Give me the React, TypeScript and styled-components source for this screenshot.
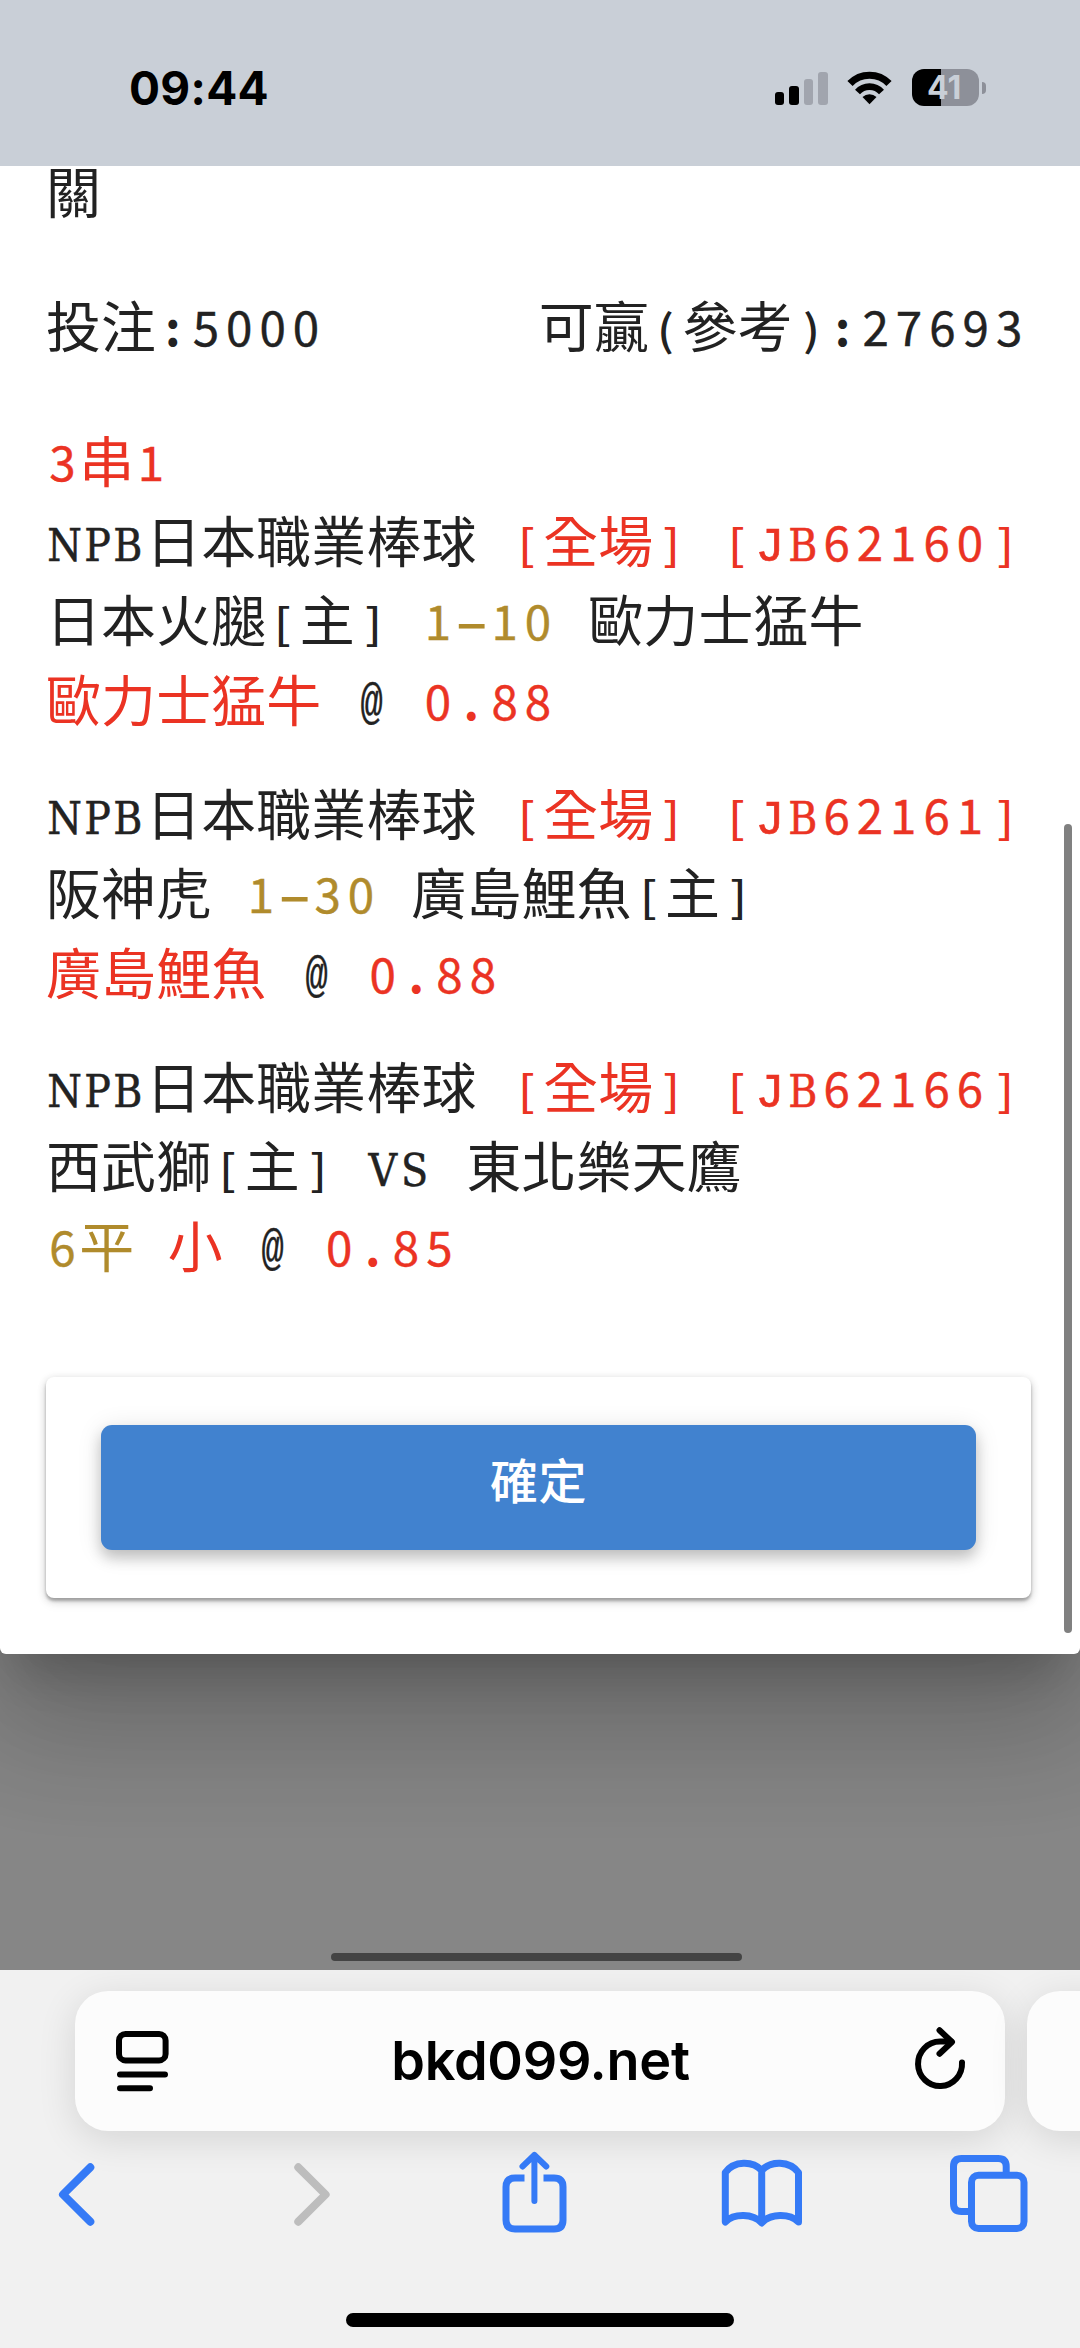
import React from "react";
import styled, { createGlobalStyle } from "styled-components";

const Global = createGlobalStyle`
  * { box-sizing: border-box; }
  html, body { margin: 0; padding: 0; }
  body { background: #868686; }
`;

const INK = "#222222";
const RED = "#eb3323";
const GOLD = "#b08b2c";
const BLUE = "#357af6";
const CJK = `"Noto Sans CJK TC", "Noto Sans CJK JP", sans-serif`;
const UI = `Inter, "Liberation Sans", sans-serif`;
const PITCH = 33.35;

const Screen = styled.div`
  width: 1080px;
  height: 2348px;
  display: flex;
  flex-direction: column;
  overflow: hidden;
  background: #868686;
`;

const StatusBar = styled.header`
  flex: none;
  height: 166px;
  padding: 9px 94.5px 0 129px;
  display: flex;
  align-items: center;
  justify-content: space-between;
  background: #c9cfd7;
  position: relative;
  z-index: 2;
`;

const Clock = styled.span`
  font: 700 46px/56px ${UI};
  letter-spacing: 0.3px;
  color: #000;
`;

const StatusIcons = styled.div`
  display: flex;
  align-items: center;
`;

const Signal = styled.div`
  display: flex;
  align-items: flex-end;
  gap: 5px;
  height: 34px;
  margin-right: 19px;
`;

const SignalBar = styled.i<{ $h: number; $on?: boolean }>`
  width: 9.4px;
  height: ${(p) => p.$h}px;
  border-radius: 3px;
  background: ${(p) => (p.$on ? "#000" : "#a1a5ae")};
`;

const Battery = styled.div`
  width: 67.5px;
  height: 37px;
  margin-left: 20px;
  padding-right: 2px;
  border-radius: 12px;
  background: linear-gradient(90deg, #000 0 28.5px, #8d9099 28.5px);
  color: #c9cfd7;
  font: 700 32px/37px ${UI};
  letter-spacing: 0.2px;
  text-align: center;
`;

const BatteryNub = styled.i`
  width: 4px;
  height: 12px;
  margin-left: 2.5px;
  border-radius: 0 4px 4px 0;
  background: #8d9099;
`;

const Page = styled.main`
  flex: none;
  height: 1803.5px;
  position: relative;
  overflow: hidden;
`;

const Dialog = styled.section`
  height: 1488px;
  overflow: hidden;
  background: #fff;
  border-radius: 0 0 6px 6px;
  box-shadow: 0 33px 45px -21px rgba(0, 0, 0, 0.2), 0 72px 114px 9px rgba(0, 0, 0, 0.14),
    0 27px 138px 24px rgba(0, 0, 0, 0.12);
`;

const DialogBody = styled.div`
  margin-top: -16px;
  padding: 0 49px 0 46px;
`;

const Line = styled.div`
  height: 79.7px;
  font: 400 54.9px/79.7px ${CJK};
  letter-spacing: 0.2px;
  color: ${INK};
  white-space: pre;
`;

const Totals = styled.div`
  display: flex;
  justify-content: space-between;
  margin: 54.8px 0;
  padding-right: 5px;
`;

const Bet = styled.article`
  margin-bottom: 34px;
`;

const Ink = styled.span<{ $c: string }>`
  color: ${(p) => p.$c};
`;

const Run = styled.span<{ $n: number }>`
  display: inline-block;
  width: ${(p) => p.$n * PITCH}px;
  line-height: 56px;
  vertical-align: 1px;
`;

const Digits = styled(Run)`
  padding-left: 3.2px;
  font-size: 47.5px;
  letter-spacing: 7px;
  -webkit-text-stroke: 0.4px currentColor;
`;

const Caps = styled(Run)<{ $ls: number }>`
  font-family: "DejaVu Serif Condensed", "DejaVu Serif", serif;
  font-size: 44px;
  font-stretch: condensed;
  padding-left: ${(p) => p.$ls / 2}px;
  letter-spacing: ${(p) => p.$ls}px;
  -webkit-text-stroke: 0.5px currentColor;
`;

const LetterJ = styled(Run)`
  font-family: "Liberation Mono", monospace;
  font-size: 49px;
  text-align: center;
  -webkit-text-stroke: 0.6px currentColor;
`;

const Space = styled(Run)``;

const Point = styled(Run)`
  font-size: 48px;
  font-weight: 700;
  text-align: center;
`;

const Dash = styled(Point)`
  transform: scaleX(1.2);
`;

const Bracket = styled(Run)<{ $dx: number }>`
  font-size: 42.5px;
  font-weight: 500;
  text-align: center;
  transform: translateX(${(p) => p.$dx}px) scaleX(1.12);
`;

const At = styled(Run)`
  font-family: "Liberation Mono", monospace;
  font-size: 50px;
  text-align: center;
  transform: translate(0, -2px) scaleX(0.74);
  -webkit-text-stroke: 0.4px currentColor;
`;

const CAPS_SPACING: Record<string, number> = { NPB: 2.4, VS: 4, B: 3 };

/* Sets latin runs on a fixed pitch beside full-width characters. */
function Mono({ children }: { children: string }) {
  const tokens = children.match(/[0-9]+|J|[A-Z]+|[\[\]():.@ \-]|[^0-9A-Z\[\]():.@ \-]+/g) || [];
  return (
    <>
      {tokens.map((t, i) => {
        const n = t.length;
        if (/^[0-9]+$/.test(t)) return <Digits key={i} $n={n}>{t}</Digits>;
        if (t === "J") return <LetterJ key={i} $n={1}>{t}</LetterJ>;
        if (/^[A-Z]+$/.test(t)) return <Caps key={i} $n={n} $ls={CAPS_SPACING[t] ?? 3}>{t}</Caps>;
        if (t === "@") return <At key={i} $n={1}>{t}</At>;
        if (t === " ") return <Space key={i} $n={1}>{t}</Space>;
        if (t === "-") return <Dash key={i} $n={1}>–</Dash>;
        if (/^[:.]$/.test(t)) return <Point key={i} $n={1}>{t}</Point>;
        if (/^[\[(]$/.test(t)) return <Bracket key={i} $n={1} $dx={0}>{t}</Bracket>;
        if (/^[\])]$/.test(t)) return <Bracket key={i} $n={1} $dx={2}>{t}</Bracket>;
        return <React.Fragment key={i}>{t}</React.Fragment>;
      })}
    </>
  );
}

type Part = [string, string];

const bets: Part[][][] = [
  [
    [[INK, "NPB日本職業棒球 "], [RED, "[全場] [JB62160]"]],
    [[INK, "日本火腿[主] "], [GOLD, "1-10"], [INK, " 歐力士猛牛"]],
    [[RED, "歐力士猛牛"], [INK, " @ "], [RED, "0.88"]],
  ],
  [
    [[INK, "NPB日本職業棒球 "], [RED, "[全場] [JB62161]"]],
    [[INK, "阪神虎 "], [GOLD, "1-30"], [INK, " 廣島鯉魚[主]"]],
    [[RED, "廣島鯉魚"], [INK, " @ "], [RED, "0.88"]],
  ],
  [
    [[INK, "NPB日本職業棒球 "], [RED, "[全場] [JB62166]"]],
    [[INK, "西武獅[主] VS 東北樂天鷹"]],
    [[GOLD, "6平 "], [RED, "小"], [INK, " @ "], [RED, "0.85"]],
  ],
];

const ActionCard = styled.div`
  width: 985px;
  height: 221px;
  margin-top: 93px;
  padding: 48px 55px;
  border-radius: 8px;
  background: #fff;
  box-shadow: 0 3px 3px rgba(0, 0, 0, 0.26), 0 2px 8px rgba(0, 0, 0, 0.16), 0 5px 12px rgba(0, 0, 0, 0.08);
`;

const Confirm = styled.button`
  display: block;
  width: 875px;
  height: 125px;
  padding: 0 0 18px;
  border: 0;
  border-radius: 11px;
  background: #4182cf;
  color: #fff;
  font: 500 48px/68px ${CJK};
  letter-spacing: 0.6px;
  box-shadow: 0 8px 14px rgba(0, 0, 0, 0.2), 0 3px 26px rgba(0, 0, 0, 0.11);
`;

const ScrollThumb = styled.div`
  position: absolute;
  top: 658px;
  right: 8px;
  width: 8px;
  height: 809px;
  border-radius: 4px;
  background: #808080;
`;

const SheetHandle = styled.div`
  position: absolute;
  left: 331px;
  bottom: 8.5px;
  width: 411px;
  height: 8px;
  border-radius: 4px;
  background: #444;
`;

const BrowserBar = styled.footer`
  flex: 1;
  display: flex;
  flex-direction: column;
  background: #f1f1f1;
  position: relative;
  overflow: hidden;
`;

const Tabs = styled.div`
  display: flex;
  gap: 21.5px;
  padding: 21.5px 0 0 75px;
`;

const Tab = styled.div`
  flex: none;
  width: 930px;
  height: 139.5px;
  padding: 0 38px 0 39px;
  display: grid;
  grid-template-columns: 58px 1fr 58px;
  align-items: center;
  border-radius: 33px;
  background: #fcfcfc;
  box-shadow: 0 8px 38px rgba(0, 0, 0, 0.12);
`;

const Address = styled.span`
  font: 600 54px/64px ${UI};
  letter-spacing: -0.3px;
  text-align: center;
  color: #000;
`;

const Tools = styled.nav`
  display: grid;
  grid-template-columns: 236px 208px 218px 228px auto;
  align-items: center;
  height: 86px;
  margin-top: 18px;
  padding-left: 57.5px;
`;

const ToolIcon = styled.svg<{ $c?: string; $w?: number; $top?: number }>`
  display: block;
  margin-top: ${(p) => p.$top || 0}px;
  fill: none;
  stroke: ${(p) => p.$c || BLUE};
  stroke-width: ${(p) => p.$w || 7}px;
  stroke-linecap: round;
  stroke-linejoin: round;
`;

const OpenPath = styled.path`
  stroke-linecap: butt;
`;

const ThinPath = styled.path`
  stroke-width: 6px;
`;

const HomeIndicator = styled.div`
  width: 388px;
  height: 14px;
  margin: 78px auto 0;
  border-radius: 7px;
  background: #000;
`;

export default function App() {
  return (
    <Screen>
      <Global />
      <StatusBar>
        <Clock>09:44</Clock>
        <StatusIcons>
          <Signal>
            <SignalBar $h={13} $on />
            <SignalBar $h={19} $on />
            <SignalBar $h={26} />
            <SignalBar $h={33} />
          </Signal>
          <svg width="45" height="35" viewBox="0 0 45 35" fill="none" stroke="#000">
            <path d="M3 13.6A27 27 0 0 1 42 13.6" strokeWidth="7.2" />
            <path d="M10.5 22A16 16 0 0 1 34.5 22" strokeWidth="6.6" />
            <path d="M15.5 27A10.5 10.5 0 0 1 29.5 27L22.5 34.2Z" fill="#000" stroke="none" />
          </svg>
          <Battery>41</Battery>
          <BatteryNub />
        </StatusIcons>
      </StatusBar>

      <Page>
        <Dialog>
          <DialogBody>
            <Line>關</Line>
            <Totals>
              <Line><Mono>投注:5000</Mono></Line>
              <Line><Mono>可贏(參考):27693</Mono></Line>
            </Totals>
            <Line><Ink $c={RED}><Mono>3串1</Mono></Ink></Line>
            {bets.map((lines, b) => (
              <Bet key={b}>
                {lines.map((parts, l) => (
                  <Line key={l}>
                    {parts.map(([c, text], p) => (
                      <Ink key={p} $c={c}><Mono>{text}</Mono></Ink>
                    ))}
                  </Line>
                ))}
              </Bet>
            ))}
            <ActionCard>
              <Confirm>確定</Confirm>
            </ActionCard>
          </DialogBody>
        </Dialog>
        <ScrollThumb />
        <SheetHandle />
      </Page>

      <BrowserBar>
        <Tabs>
          <Tab>
            <ToolIcon $c="#000" $w={6} width="58" height="64" viewBox="0 0 58 64">
              <rect x="5" y="5" width="46.6" height="26.4" rx="6.5" />
              <path d="M6 45.5H51M6 59.2H36" />
            </ToolIcon>
            <Address>bkd099.net</Address>
            <ToolIcon $c="#000" $w={6} width="58" height="70" viewBox="0 0 58 70">
              <path d="M53 36.5A22 22.3 0 1 1 31 15.5H42" />
              <path d="M30.5 4.2L43 16L30.5 27.7" />
            </ToolIcon>
          </Tab>
          <Tab />
        </Tabs>
        <Tools>
          <ToolIcon $w={8} $top={5} width="37" height="63" viewBox="0 0 37 63">
            <path d="M32.3 4.3L5 31.5L32.3 58.7" />
          </ToolIcon>
          <ToolIcon $c="#bdbdbd" $w={8} $top={5} width="37" height="63" viewBox="0 0 37 63">
            <path d="M4.3 4.3L31.6 31.5L4.3 58.7" />
          </ToolIcon>
          <ToolIcon width="65" height="82" viewBox="0 0 65 82">
            <OpenPath d="M22.5 27H13Q4 27 4 36V69Q4 78 13 78H52Q61 78 61 69V36Q61 27 52 27H41.5" />
            <ThinPath d="M32.4 50V4M20.5 15.5L32.4 4L44.3 15.5" />
          </ToolIcon>
          <ToolIcon $top={4} width="84" height="72" viewBox="0 0 84 72">
            <path d="M5.3 64V14.5C14 2.5 33 2.5 41.7 12.5C50.5 2.5 69.5 2.5 78.5 14.5V64C69.5 55.3 50.5 55.3 41.7 65C33 55.3 14 55.3 5.3 64ZM41.7 12.5V64" />
          </ToolIcon>
          <ToolIcon $top={4} width="82" height="82" viewBox="0 0 82 82">
            <OpenPath d="M58.2 23V13.5Q58.2 5.5 50.2 5.5H13.5Q5.5 5.5 5.5 13.5V50.5Q5.5 58.5 13.5 58.5H24" />
            <rect x="23.5" y="22.2" width="52.5" height="53.3" rx="7" />
          </ToolIcon>
        </Tools>
        <HomeIndicator />
      </BrowserBar>
    </Screen>
  );
}
